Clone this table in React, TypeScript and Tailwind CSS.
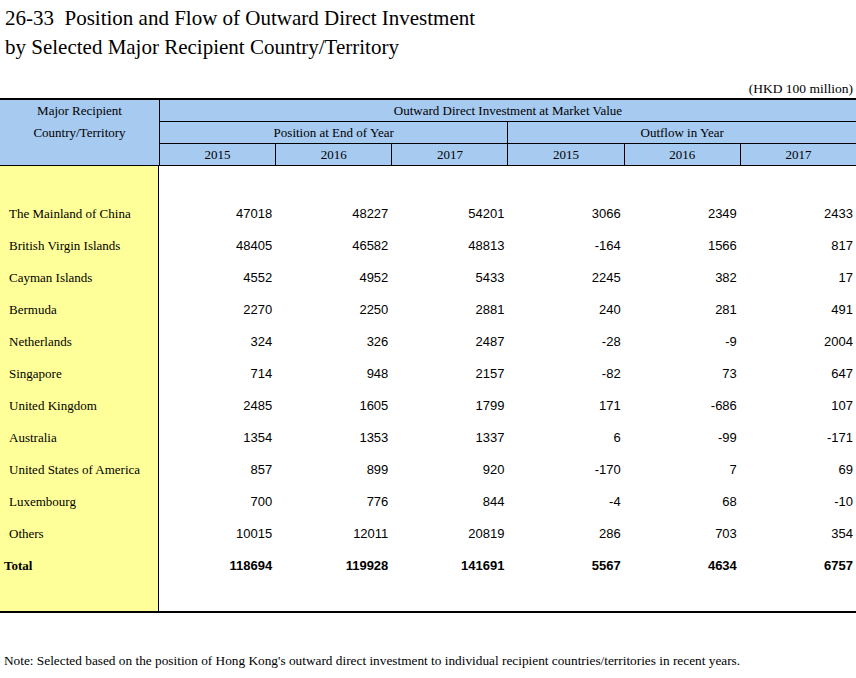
const years = ["2015", "2016", "2017"];

const rows: [string, number[]][] = [
  ["The Mainland of China", [47018, 48227, 54201, 3066, 2349, 2433]],
  ["British Virgin Islands", [48405, 46582, 48813, -164, 1566, 817]],
  ["Cayman Islands", [4552, 4952, 5433, 2245, 382, 17]],
  ["Bermuda", [2270, 2250, 2881, 240, 281, 491]],
  ["Netherlands", [324, 326, 2487, -28, -9, 2004]],
  ["Singapore", [714, 948, 2157, -82, 73, 647]],
  ["United Kingdom", [2485, 1605, 1799, 171, -686, 107]],
  ["Australia", [1354, 1353, 1337, 6, -99, -171]],
  ["United States of America", [857, 899, 920, -170, 7, 69]],
  ["Luxembourg", [700, 776, 844, -4, 68, -10]],
  ["Others", [10015, 12011, 20819, 286, 703, 354]],
];

const total = [118694, 119928, 141691, 5567, 4634, 6757];

const serif = "font-['Liberation_Serif','Times_New_Roman',serif]";
const sans = "font-['Liberation_Sans',Arial,sans-serif]";

function Row({ name, values, bold }: { name: string; values: number[]; bold?: boolean }) {
  return (
    <div className="grid grid-cols-[159px_repeat(6,1fr)] h-[32px] items-center">
      <div
        className={`h-full flex items-center bg-[#ffff99] border-r border-black ${serif} text-[13px] ${
          bold ? "font-bold pl-[4px]" : "pl-[9px]"
        }`}
      >
        {name}
      </div>
      {values.map((v, i) => (
        <div
          key={i}
          className={`text-right pr-[3px] ${sans} text-[13px] ${bold ? "font-bold" : ""}`}
        >
          {v}
        </div>
      ))}
    </div>
  );
}

function Spacer({ h }: { h: string }) {
  return (
    <div className={`grid grid-cols-[159px_repeat(6,1fr)] ${h}`}>
      <div className="bg-[#ffff99] border-r border-black" />
    </div>
  );
}

export default function App() {
  return (
    <div className="w-[856px] h-[678px] bg-white text-black overflow-hidden">
      {/* Title */}
      <div className={`${serif} text-[21px] leading-[29px] pt-[4px] pl-[5px]`}>
        <div>26-33&nbsp;&nbsp;Position and Flow of Outward Direct Investment</div>
        <div>by Selected Major Recipient Country/Territory</div>
      </div>

      <div className={`h-[36px] flex items-end justify-end pr-[3px] pb-[1px] ${serif} text-[13.5px] leading-[16px]`}>
        (HKD 100 million)
      </div>

      {/* Table */}
      <div className="border-t-2 border-b-2 border-black">
        {/* Header */}
        <div
          className={`grid grid-cols-[159px_repeat(6,1fr)] grid-rows-[22px_22px_22px] bg-[#a6caf0] ${serif} text-[13px]`}
        >
          <div className="row-span-3 border-b border-black flex flex-col items-center leading-[22px]">
            <span>Major Recipient</span>
            <span>Country/Territory</span>
          </div>
          <div className="col-span-6 border-l border-b border-black flex items-center justify-center">
            Outward Direct Investment at Market Value
          </div>
          <div className="col-span-3 border-l border-b border-black flex items-center justify-center">
            Position at End of Year
          </div>
          <div className="col-span-3 border-l border-b border-black flex items-center justify-center">
            Outflow in Year
          </div>
          {[...years, ...years].map((y, i) => (
            <div key={i} className="border-l border-b border-black flex items-center justify-center">
              {y}
            </div>
          ))}
        </div>

        {/* Body */}
        <Spacer h="h-[32px]" />
        {rows.map(([name, values]) => (
          <Row key={name} name={name} values={values} />
        ))}
        <Row name="Total" values={total} bold />
        <Spacer h="h-[29px]" />
      </div>

      <div className={`mt-[40px] pl-[4px] ${serif} text-[13.3px] leading-[16px]`}>
        Note: Selected based on the position of Hong Kong's outward direct investment to individual recipient
        countries/territories in recent years.
      </div>
    </div>
  );
}
